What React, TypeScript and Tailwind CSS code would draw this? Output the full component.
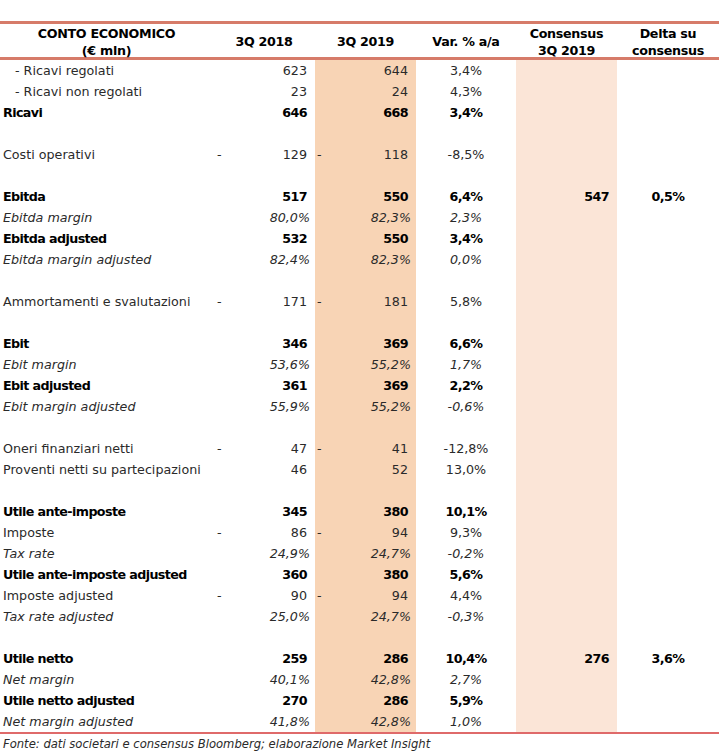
import React from "react";

type Kind = "normal" | "sub" | "bold" | "italic" | "blank";
type Row = {
  label?: string;
  kind: Kind;
  n18?: boolean;
  v18?: string;
  n19?: boolean;
  v19?: string;
  vr?: string;
  cons?: string;
  delta?: string;
};

const rows: Row[] = [
  { label: "- Ricavi regolati", kind: "sub", v18: "623", v19: "644", vr: "3,4%" },
  { label: "- Ricavi non regolati", kind: "sub", v18: "23", v19: "24", vr: "4,3%" },
  { label: "Ricavi", kind: "bold", v18: "646", v19: "668", vr: "3,4%" },
  { kind: "blank" },
  { label: "Costi operativi", kind: "normal", n18: true, v18: "129", n19: true, v19: "118", vr: "-8,5%" },
  { kind: "blank" },
  { label: "Ebitda", kind: "bold", v18: "517", v19: "550", vr: "6,4%", cons: "547", delta: "0,5%" },
  { label: "Ebitda margin", kind: "italic", v18: "80,0%", v19: "82,3%", vr: "2,3%" },
  { label: "Ebitda adjusted", kind: "bold", v18: "532", v19: "550", vr: "3,4%" },
  { label: "Ebitda margin adjusted", kind: "italic", v18: "82,4%", v19: "82,3%", vr: "0,0%" },
  { kind: "blank" },
  { label: "Ammortamenti e svalutazioni", kind: "normal", n18: true, v18: "171", n19: true, v19: "181", vr: "5,8%" },
  { kind: "blank" },
  { label: "Ebit", kind: "bold", v18: "346", v19: "369", vr: "6,6%" },
  { label: "Ebit margin", kind: "italic", v18: "53,6%", v19: "55,2%", vr: "1,7%" },
  { label: "Ebit adjusted", kind: "bold", v18: "361", v19: "369", vr: "2,2%" },
  { label: "Ebit margin adjusted", kind: "italic", v18: "55,9%", v19: "55,2%", vr: "-0,6%" },
  { kind: "blank" },
  { label: "Oneri finanziari netti", kind: "normal", n18: true, v18: "47", n19: true, v19: "41", vr: "-12,8%" },
  { label: "Proventi netti su partecipazioni", kind: "normal", v18: "46", v19: "52", vr: "13,0%" },
  { kind: "blank" },
  { label: "Utile ante-imposte", kind: "bold", v18: "345", v19: "380", vr: "10,1%" },
  { label: "Imposte", kind: "normal", n18: true, v18: "86", n19: true, v19: "94", vr: "9,3%" },
  { label: "Tax rate", kind: "italic", v18: "24,9%", v19: "24,7%", vr: "-0,2%" },
  { label: "Utile ante-imposte adjusted", kind: "bold", v18: "360", v19: "380", vr: "5,6%" },
  { label: "Imposte adjusted", kind: "normal", n18: true, v18: "90", n19: true, v19: "94", vr: "4,4%" },
  { label: "Tax rate adjusted", kind: "italic", v18: "25,0%", v19: "24,7%", vr: "-0,3%" },
  { kind: "blank" },
  { label: "Utile netto", kind: "bold", v18: "259", v19: "286", vr: "10,4%", cons: "276", delta: "3,6%" },
  { label: "Net margin", kind: "italic", v18: "40,1%", v19: "42,8%", vr: "2,7%" },
  { label: "Utile netto adjusted", kind: "bold", v18: "270", v19: "286", vr: "5,9%" },
  { label: "Net margin adjusted", kind: "italic", v18: "41,8%", v19: "42,8%", vr: "1,0%" },
];

const font = { fontFamily: '"DejaVu Sans", "Liberation Sans", sans-serif' };

function styleFor(kind: Kind) {
  if (kind === "bold") return "font-bold text-black tracking-[-0.6px]";
  if (kind === "italic") return "italic text-[#2a2a2a]";
  return "text-[#2a2a2a]";
}

function DataRow({ r }: { r: Row }) {
  const st = styleFor(r.kind);
  const isPct = r.kind === "italic";
  return (
    <div className="grid grid-cols-[213px_102px_101px_100px_101px_102px] h-[21px] text-[12.7px] leading-[21px]">
      <div className={`${st} whitespace-nowrap ${r.kind === "sub" ? "pl-[15px]" : "pl-[3px]"}`}>
        {r.label ?? ""}
      </div>
      <div className={`${st} flex justify-between ${isPct ? "pr-[5px]" : "pr-[8px]"} pl-[4px]`}>
        <span>{r.n18 ? "-" : ""}</span>
        <span>{r.v18 ?? ""}</span>
      </div>
      <div className={`${st} bg-[#f8d4b5] flex justify-between ${isPct ? "pr-[5px]" : "pr-[8px]"} pl-[2px]`}>
        <span>{r.n19 ? "-" : ""}</span>
        <span>{r.v19 ?? ""}</span>
      </div>
      <div className={`${st} text-center`}>{r.vr ?? ""}</div>
      <div className={`${st} bg-[#fbe5d7] text-right pr-[8px]`}>{r.cons ?? ""}</div>
      <div className={`${st} text-center`}>{r.delta ?? ""}</div>
    </div>
  );
}

export default function App() {
  return (
    <div className="w-[719px] h-[755px] bg-white overflow-hidden" style={font}>
      <div className="pt-[21px]">
        <div className="border-t-[3px] border-[#d67b69]">
          <div className="grid grid-cols-[213px_102px_101px_100px_101px_102px] h-[33px] items-center text-[12.7px] leading-[17px] font-bold text-black tracking-[-0.3px] text-center border-b-[3px] border-[#d67b69] box-content">
            <div className="pt-[1px]">
              CONTO ECONOMICO
              <br />
              (€ mln)
            </div>
            <div>3Q 2018</div>
            <div>3Q 2019</div>
            <div>Var. % a/a</div>
            <div className="pt-[1px]">
              Consensus
              <br />
              3Q 2019
            </div>
            <div className="pt-[1px]">
              Delta su
              <br />
              consensus
            </div>
          </div>
          <div className="border-b-2 border-[#df6a6a]">
            {rows.map((r, i) => (
              <DataRow key={i} r={r} />
            ))}
          </div>
        </div>
        <div className="pl-[3px] pt-[2px] text-[11.6px] italic text-[#2a2a2a] whitespace-nowrap leading-[16px]">
          Fonte: dati societari e consensus Bloomberg; elaborazione Market Insight
        </div>
      </div>
    </div>
  );
}
